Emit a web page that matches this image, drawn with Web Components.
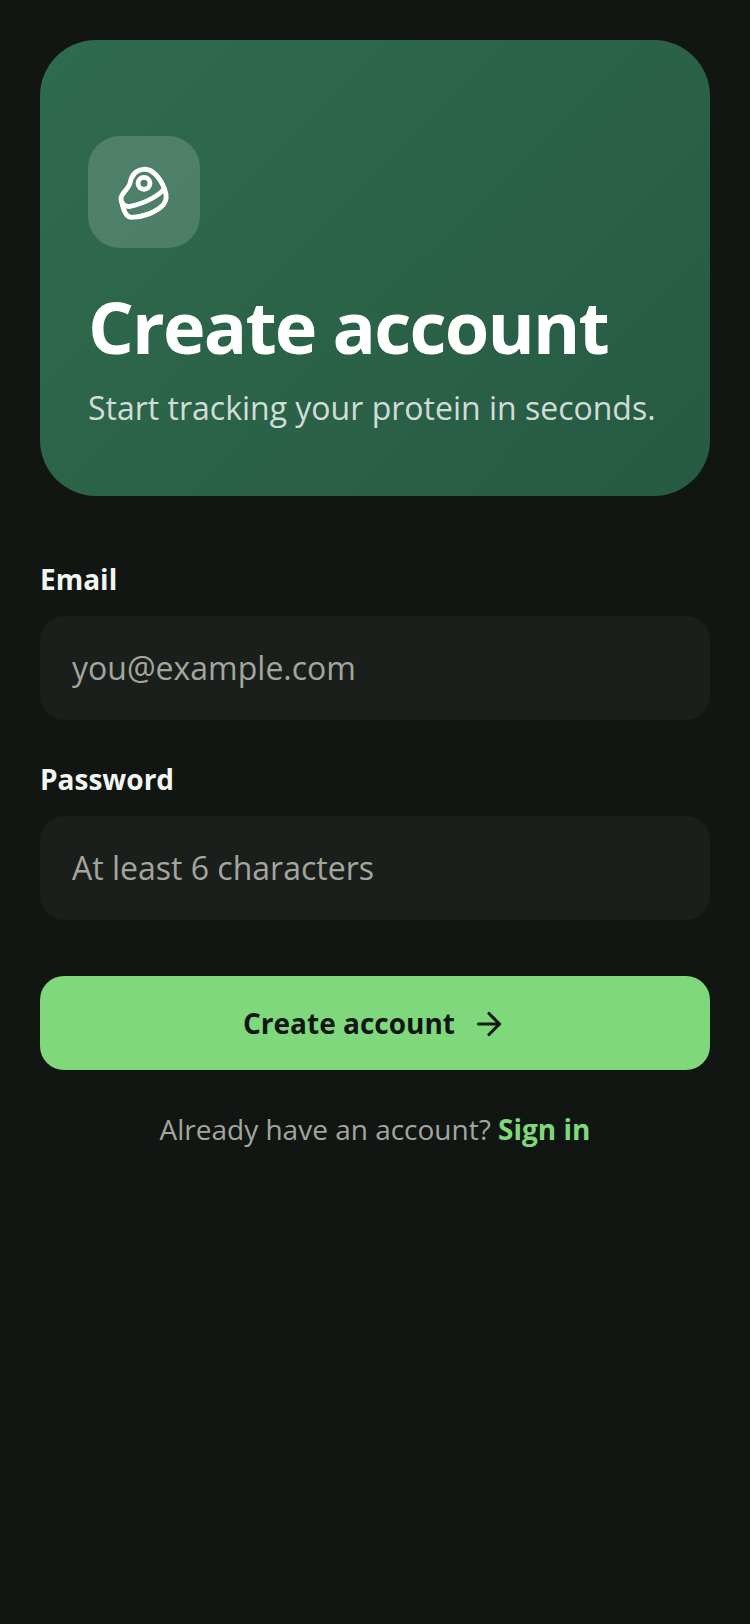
<!DOCTYPE html>
<html lang="en"><head><meta charset="utf-8"><title>Create account</title>
<style>html,body{margin:0;background:#111613}body{font-family:"Open Sans",sans-serif;min-height:1624px}</style>
</head><body>
<signup-page></signup-page>
<script>
const meat=(s)=>`<svg width="${s}" height="${s}" viewBox="0 0 204 204" fill="none" stroke="#fff" stroke-width="14.5" stroke-linecap="round" stroke-linejoin="round"><circle cx="102" cy="76" r="18"/><path d="M100 34C127 30 152 62 163 92C150 110 110 135 60 145C45 148 33 135 33 122C33 105 55 95 60 75C65 50 80 36 100 34Z"/><path d="M163 92C170 108 172 125 160 140C135 165 95 178 65 178C50 178 42 165 36 135"/></svg>`;
const def=(name,html)=>customElements.define(name,class extends HTMLElement{constructor(){super();this.attachShadow({mode:'open'}).innerHTML=html(this)}});
def('hero-card',()=>`<style>
:host{display:flex;flex-direction:column;box-sizing:border-box;height:456px;padding:96px 48px 0;border-radius:56px;background:linear-gradient(135deg,#2f6b4f,#265a42);color:#fff}
.ic{width:112px;height:112px;border-radius:32px;background:rgba(255,255,255,.16);display:flex;align-items:center;justify-content:center}
h1{margin:30px 0 0;font-size:72px;line-height:96px;font-weight:700;letter-spacing:-1.8px}
p{margin:10px 0 0;font-size:32px;line-height:48px;color:rgba(255,255,255,.8)}
</style><div class="ic">${meat(68)}</div><h1>Create account</h1><p>Start tracking your protein in seconds.</p>`);
def('form-field',el=>`<style>
:host{display:block}
label{display:block;font-size:28px;line-height:38px;font-weight:700;color:#f2f5f1;margin-bottom:18px}
.in{box-sizing:border-box;height:104px;border-radius:24px;background:#1a1f1c;padding:0 32px 2px;display:flex;align-items:center;font-size:32px;color:#a3a69f}
</style><label>${el.getAttribute('label')}</label><div class="in">${el.getAttribute('placeholder')}</div>`);
def('primary-button',()=>`<style>
:host{display:flex;align-items:center;justify-content:center;gap:16px;height:94px;border-radius:24px;background:#7fd97c;color:#111613;font-size:28px;font-weight:700}
svg{display:block;margin-top:1px}
</style><slot></slot><svg width="36" height="36" viewBox="0 0 24 24" fill="none" stroke="currentColor" stroke-width="2.1" stroke-linecap="round" stroke-linejoin="round"><path d="M5 12h14"/><path d="m12 5 7 7-7 7"/></svg>`);
def('signup-page',()=>`<style>
:host{display:flex;flex-direction:column;padding:40px 40px 0}
.form{display:flex;flex-direction:column;gap:40px;margin-top:64px}
primary-button{margin-top:56px}
.foot{margin-top:39px;text-align:center;font-size:28px;line-height:40px;color:#a3a69f}
b{color:#7fd97c;font-weight:700}
</style><hero-card></hero-card>
<div class="form"><form-field label="Email" placeholder="you@example.com"></form-field><form-field label="Password" placeholder="At least 6 characters"></form-field></div>
<primary-button>Create account</primary-button>
<div class="foot">Already have an account? <b>Sign in</b></div>`);
</script></body></html>
